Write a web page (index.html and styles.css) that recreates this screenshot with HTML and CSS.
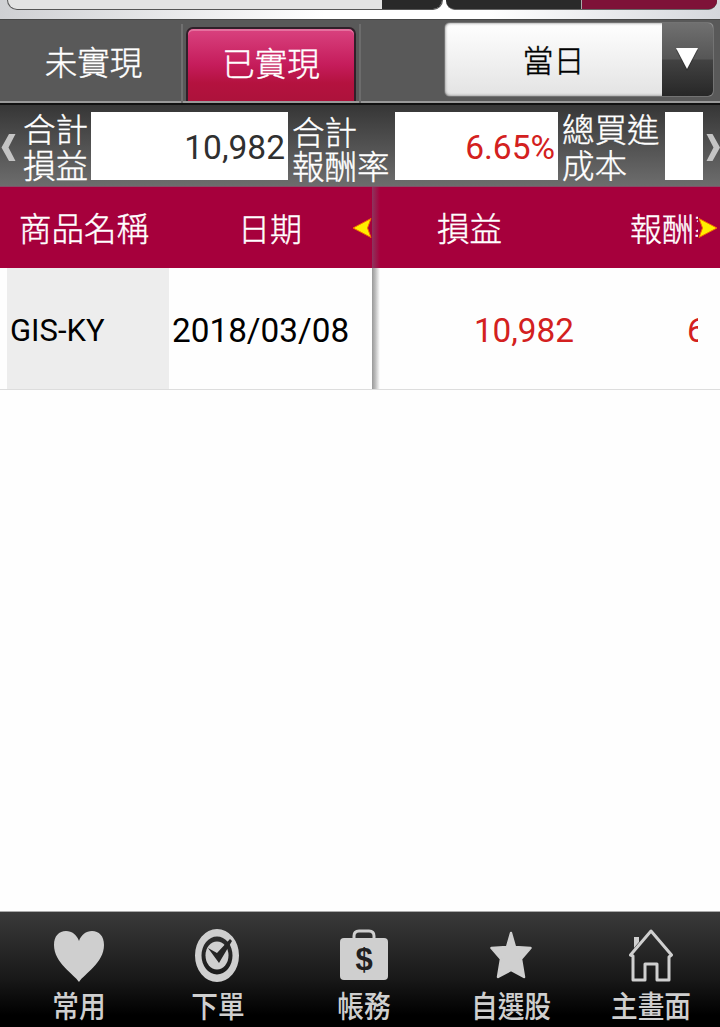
FILE: index.html
```html
<!DOCTYPE html>
<html lang="zh-Hant">
<head>
    <meta charset="UTF-8">
    <meta name="viewport" content="width=device-width, initial-scale=1.0">
    <title>已實現損益</title>
    <link rel="stylesheet" href="styles.css">
</head>
<body>
    <div class="account-bar">
        <div class="account-select"><span class="account-arrow"></span></div>
        <div class="account-switch"><span class="account-active"></span></div>
    </div>

    <nav class="tabs">
        <div class="tab">未實現</div>
        <div class="tab active">已實現</div>
        <div class="tab-end"></div>
        <div class="period">
            <span class="period-text">當日</span>
            <span class="period-arrow">
                <svg width="26" height="24" viewBox="0 0 26 24">
                    <path d="M2 3H24L13 24Z" fill="#222" opacity=".5"/>
                    <path d="M2 1H24L13 22Z" fill="#fff"/>
                </svg>
            </span>
        </div>
    </nav>

    <section class="summary">
        <svg class="scroll-arrow" width="23" height="30" viewBox="0 0 23 30">
            <path d="M9 1H15.500L8.500 14.500L15.500 28H9L1.500 14.500Z" fill="#c4c4c4"/>
        </svg>
        <div class="label first">合計<br>損益</div>
        <div class="value total">10,982</div>
        <div class="label low">合計<br>報酬率</div>
        <div class="value rate red">6.65%</div>
        <div class="label">總買進<br>成本</div>
        <div class="value cost"></div>
        <svg class="scroll-arrow" width="17" height="30" viewBox="0 0 17 30">
            <path d="M3.500 1H9.500L17 14.500L9.500 28H3.500L10.500 14.500Z" fill="#c4c4c4"/>
        </svg>
    </section>

    <section class="table">
        <div class="fixed">
            <div class="head">
                <span class="col-name">商品名稱</span>
                <span class="col-date">日期</span>
                <svg class="more" width="20" height="22" viewBox="0 0 20 22">
                    <path d="M1 11L19 1.500L15.500 11L19 20.500Z" fill="#ffee00" stroke="#f36a00"/>
                </svg>
            </div>
            <div class="row">
                <span class="name">GIS-KY</span>
                <span class="date">2018/03/08</span>
            </div>
        </div>
        <div class="divider"></div>
        <div class="scroll">
            <div class="head">
                <span class="col-profit">損益</span>
                <span class="col-rate">報酬率</span>
                <svg class="more" width="20" height="22" viewBox="0 0 20 22">
                    <path d="M19 11L1 1.500L4.500 11L1 20.500Z" fill="#ffee00" stroke="#f36a00"/>
                </svg>
            </div>
            <div class="row">
                <span class="profit red">10,982</span>
                <span class="row-rate red">6.65%</span>
            </div>
        </div>
    </section>

    <footer class="menu">
        <a class="item favorite">
            <svg width="54" height="56" viewBox="0 0 54 56">
                <path d="M27 53C22 45 2 34 2 16C2 7 7 2 14 2C20 2 25 6 27 12C29 6 34 2 40 2C47 2 52 7 52 16C52 34 32 45 27 53Z"/>
            </svg>
            <span>常用</span>
        </a>
        <a class="item order">
            <svg width="54" height="56" viewBox="0 0 54 56">
                <path fill-rule="evenodd" d="M26 0A22 26.500 0 1 1 26 53A22 26.500 0 1 1 26 0ZM26 7.500A15.500 19 0 1 0 26 45.500A15.500 19 0 1 0 26 7.500Z"/>
                <ellipse cx="26" cy="26.500" rx="11.500" ry="14"/>
                <path class="dark" d="M17 19L26 24L39 10L41 12L28 34Z"/>
            </svg>
            <span>下單</span>
        </a>
        <a class="item billing">
            <svg width="54" height="56" viewBox="0 0 54 56">
                <path class="line" d="M17 10V7Q17 2 22 2H32Q37 2 37 7V10"/>
                <rect x="3" y="9" width="48" height="42" rx="4"/>
                <text class="dollar" x="27" y="41">$</text>
            </svg>
            <span>帳務</span>
        </a>
        <a class="item watchlist">
            <svg width="54" height="56" viewBox="0 0 54 56">
                <path class="round" d="M27 4L31 18L46.500 19L37 30L40 48L27 41L14 48L17 30L7.500 19L23 18Z"/>
            </svg>
            <span>自選股</span>
        </a>
        <a class="item home">
            <svg width="54" height="56" viewBox="0 0 54 56">
                <path d="M10 8H15V13L10 19Z"/>
                <path class="line" d="M9 27L6.500 26L27 2L47.500 26L45 28V51H33V35H21V51H9Z"/>
            </svg>
            <span>主畫面</span>
        </a>
    </footer>
</body>
</html>
```
FILE: styles.css
```css
* {
    box-sizing: border-box;
}
body {
    display: flex;
    flex-direction: column;
    width: 720px;
    height: 1027px;
    margin: 0;
    background: #fefefe;
    font-family: Roboto, "Noto Sans CJK TC", sans-serif;
    font-size: 32px;
    line-height: 36px;
    white-space: nowrap;
    overflow: hidden;
}
svg {
    display: block;
    flex: none;
}
.red {
    color: #d32020;
}

/* bottom edge of the account selector */
.account-bar {
    display: flex;
    gap: 3px;
    height: 19px;
    padding: 0 3px 9px 7px;
    background: linear-gradient(to right, #cfd0d3, #fff 45%, #fff 68%, #d5d7dc);
}
.account-select {
    display: flex;
    justify-content: flex-end;
    width: 436px;
    background: #e3e3e3;
    border: 1px solid #555;
    border-top: 0;
    border-radius: 0 0 10px 10px;
    overflow: hidden;
}
.account-arrow {
    width: 60px;
    background: #292929;
}
.account-switch {
    display: flex;
    justify-content: flex-end;
    flex: 1;
    background: #2a2a2a;
    border-bottom: 1px solid #666;
    border-radius: 0 0 9px 9px;
    overflow: hidden;
}
.account-active {
    width: 136px;
    background: #7e1238;
    border-left: 1px solid #aaa;
}

.tabs {
    display: flex;
    height: 86px;
    background: #595959;
    border-top: 1px solid #484848;
    border-bottom: 2px solid #111;
    box-shadow: inset 0 -2px #999;
    color: #fff;
    font-weight: 300;
    -webkit-text-stroke: .4px;
}
.tab {
    width: 183px;
    margin-top: 4px;
    padding: 22px 0 0 6px;
    border-right: 2px solid #707070;
    font-size: 32.5px;
    text-align: center;
}
.tab.active {
    width: 170px;
    margin: 7px 0 2px 3px;
    padding: 18px 0 0;
    background: linear-gradient(#d9427f, #c51c5b 50%, #b4123f 75%, #ad123b);
    border: 2px solid #302029;
    border-bottom: 0;
    border-radius: 7px 7px 0 0;
    box-shadow: inset 0 2px #e5709e;
}
.tab-end {
    width: 5px;
    margin-top: 4px;
    border-right: 2px solid #6c6c6c;
}
.period {
    display: flex;
    width: 270px;
    height: 75px;
    margin: 2px 0 0 83px;
    background: linear-gradient(#fff, #e3e3e3);
    border: 1px solid #737373;
    border-radius: 6px;
    box-shadow: inset 0 0 3px #777;
    overflow: hidden;
}
.period-text {
    flex: 1;
    padding-top: 21px;
    color: #000;
    font-size: 31px;
    text-align: center;
}
.period-arrow {
    width: 51px;
    padding: 24px 0 0 12px;
    background: linear-gradient(#707070, #565656 49%, #424242 51%, #272727);
}

.summary {
    display: flex;
    height: 82px;
    padding-top: 7px;
    background: linear-gradient(#363636, #6d6d6d);
    border-bottom: 1px solid #85506a;
}
.scroll-arrow {
    margin-top: 21px;
}
.label {
    width: 107px;
    padding: 1px 0 0 4px;
    color: #fff;
    font-size: 32.5px;
    font-weight: 300;
    -webkit-text-stroke: .4px;
}
.label.first {
    width: 68px;
    padding-left: 0;
}
.label.low {
    padding-top: 5px;
    line-height: 34px;
}
.value {
    height: 68px;
    padding: 18px 3px 0 0;
    background: #fff;
    font-size: 33.5px;
    text-align: right;
}
.value.total {
    width: 197px;
    color: #303030;
}
.value.rate {
    width: 163px;
}
.value.cost {
    width: 38px;
}

.table {
    display: flex;
    height: 203px;
    border-bottom: 1px solid #ddd;
}
.fixed {
    width: 372px;
}
.head {
    display: flex;
    align-items: center;
    height: 81px;
    background: #a6003c;
    color: #fff;
    font-weight: 300;
    -webkit-text-stroke: .4px;
}
.head span {
    padding-top: 4px;
}
.head .col-name {
    width: 169px;
    padding-left: 19px;
    font-size: 32.5px;
}
.head .col-date {
    width: 183px;
    padding-left: 69px;
}
.row {
    display: flex;
    height: 121px;
    font-size: 33.3px;
    line-height: 125px;
}
.name {
    width: 162px;
    margin-left: 7px;
    padding-left: 3px;
    background: #ededed;
    color: #000;
    font-size: 31px;
}
.date {
    padding-left: 3px;
    color: #000;
}
.divider {
    width: 8px;
    background: linear-gradient(to right, #8d355d, #a6003c) 0 0 / 8px 81px no-repeat, linear-gradient(to right, #999, #bbb 40%, #fff);
}
.scroll {
    flex: 1;
}
.head .col-profit {
    width: 250px;
    padding-left: 57px;
    font-size: 32.5px;
}
.head .col-rate {
    width: 68px;
    overflow: hidden;
}
.profit {
    width: 194px;
    text-align: right;
}
.row-rate {
    width: 11px;
    margin-left: 113px;
    overflow: hidden;
}

.menu {
    display: flex;
    height: 116px;
    margin-top: auto;
    padding-left: 12px;
    background: linear-gradient(#3a3a3a, #171717 60%, #000 90%);
    border-top: 1px solid #aaa;
    color: #cfcfcf;
}
.item {
    display: flex;
    flex-direction: column;
    align-items: center;
    padding-top: 17px;
}
.item svg {
    fill: #cfcfcf;
}
.item span {
    margin-top: 4px;
    font-size: 30px;
    font-weight: 500;
    transform: scaleX(.89);
}
.favorite {
    width: 134px;
}
.order {
    width: 143px;
}
.billing {
    width: 149px;
}
.watchlist {
    width: 146px;
}
.home {
    width: 134px;
}
.item .line {
    fill: none;
    stroke: #cfcfcf;
    stroke-width: 3;
    stroke-linejoin: round;
}
.item .round {
    stroke: #cfcfcf;
    stroke-width: 2.5;
    stroke-linejoin: round;
}
.item .dark {
    fill: #252525;
}
.item .dollar {
    fill: #202020;
    font: bold 31px "Liberation Sans", Arial, sans-serif;
    text-anchor: middle;
}
```
